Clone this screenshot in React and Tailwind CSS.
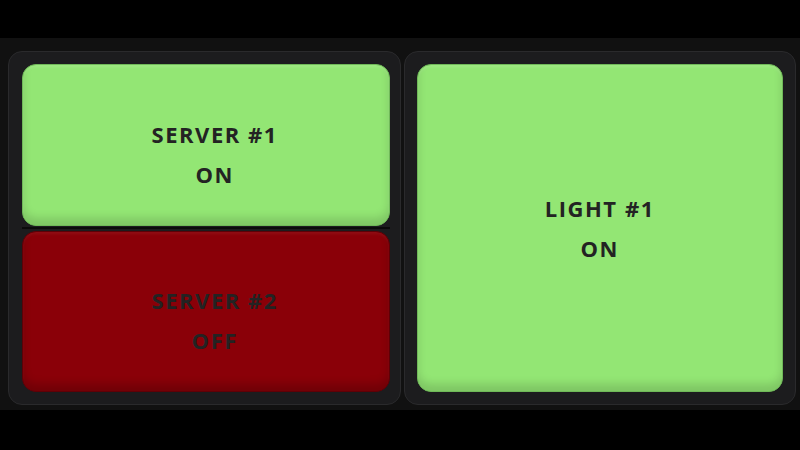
import { useState } from "react";

const tiles = {
  on: "bg-[#93e674] border-[#6fb958] shadow-[inset_0_-7px_9px_rgba(0,0,0,0.14),inset_0_2px_3px_rgba(255,255,255,0.12)]",
  off: "bg-[#8a0008] border-[#5e0006] shadow-[inset_0_-7px_9px_rgba(0,0,0,0.18),inset_0_2px_3px_rgba(255,255,255,0.06)]",
};

function Tile({ name, on, className = "" }) {
  return (
    <button
      className={`flex flex-col items-center justify-center rounded-[14px] border text-[#232323] ${
        on ? tiles.on : tiles.off
      } ${className}`}
      style={{ fontFamily: '"Open Sans", "Noto Sans", sans-serif' }}
    >
      <span className="text-[22px] font-bold tracking-[0.07em] leading-[40px]">
        {name}
      </span>
      <span className="text-[22px] font-bold tracking-[0.07em] leading-[40px]">
        {on ? "ON" : "OFF"}
      </span>
    </button>
  );
}

export default function App() {
  const [state] = useState({ server1: true, server2: false, light1: true });

  return (
    <div className="w-full h-[450px] bg-black flex flex-col">
      <div className="h-[38px] bg-black" />
      <div className="h-[372px] bg-[#111111] pl-2 pr-1 pt-[13px] pb-[5px] grid grid-cols-2 gap-[3px]">
        {/* Servers */}
        <div className="rounded-[14px] border border-[#2a2a2c] bg-[#1c1c1e] pl-[13px] pr-[10px] py-[12px] flex flex-col">
          <Tile name="SERVER #1" on={state.server1} className="flex-1 pt-[18px] pl-[18px]" />
          <div className="h-[5px] flex items-center">
            <div className="h-[2px] w-full bg-[#0b0b0b]" />
          </div>
          <Tile name="SERVER #2" on={state.server2} className="flex-1 pt-[18px] pl-[18px]" />
        </div>

        {/* Lights */}
        <div className="rounded-[14px] border border-[#2a2a2c] bg-[#1c1c1e] px-[12px] py-[12px] flex flex-col">
          <Tile name="LIGHT #1" on={state.light1} className="flex-1 pb-[1px]" />
        </div>
      </div>
      <div className="flex-1 bg-black" />
    </div>
  );
}
